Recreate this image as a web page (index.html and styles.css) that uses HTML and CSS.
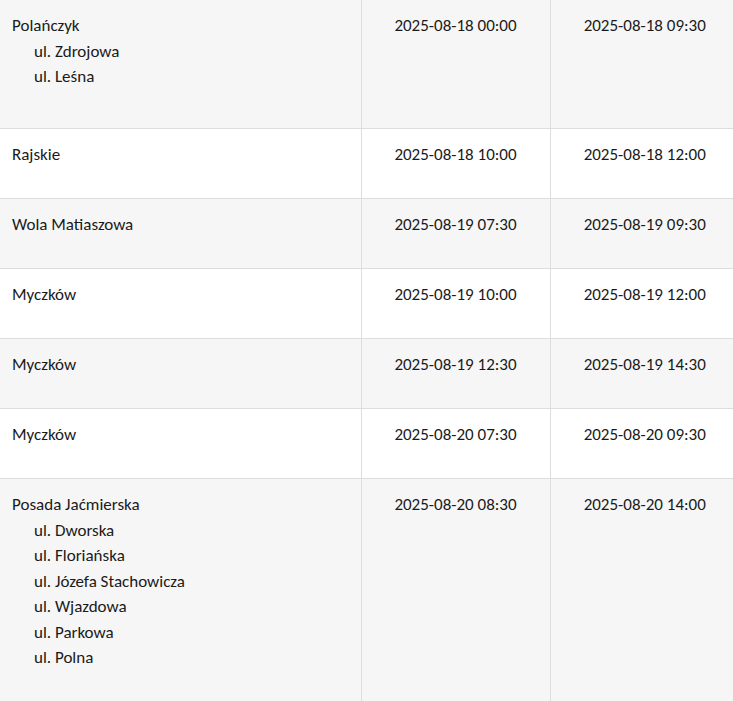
FILE: index.html
```html
<!DOCTYPE html>
<html lang="pl">
<head>
<meta charset="utf-8">
<title>Harmonogram</title>
<link rel="stylesheet" href="styles.css">
</head>
<body>
<table class="schedule">
  <colgroup>
    <col class="col-place">
    <col class="col-time">
    <col class="col-time">
  </colgroup>
  <tbody>
    <tr class="row-alt first">
      <td class="place">Polańczyk
        <ul class="streets"><li>ul. Zdrojowa</li><li>ul. Leśna</li></ul>
      </td>
      <td class="time">2025-08-18 00:00</td>
      <td class="time">2025-08-18 09:30</td>
    </tr>
    <tr>
      <td class="place">Rajskie</td>
      <td class="time">2025-08-18 10:00</td>
      <td class="time">2025-08-18 12:00</td>
    </tr>
    <tr class="row-alt">
      <td class="place">Wola Matiaszowa</td>
      <td class="time">2025-08-19 07:30</td>
      <td class="time">2025-08-19 09:30</td>
    </tr>
    <tr>
      <td class="place">Myczków</td>
      <td class="time">2025-08-19 10:00</td>
      <td class="time">2025-08-19 12:00</td>
    </tr>
    <tr class="row-alt">
      <td class="place">Myczków</td>
      <td class="time">2025-08-19 12:30</td>
      <td class="time">2025-08-19 14:30</td>
    </tr>
    <tr>
      <td class="place">Myczków</td>
      <td class="time">2025-08-20 07:30</td>
      <td class="time">2025-08-20 09:30</td>
    </tr>
    <tr class="row-alt">
      <td class="place">Posada Jaćmierska
        <ul class="streets"><li>ul. Dworska</li><li>ul. Floriańska</li><li>ul. Józefa Stachowicza</li><li>ul. Wjazdowa</li><li>ul. Parkowa</li><li>ul. Polna</li></ul>
      </td>
      <td class="time">2025-08-20 08:30</td>
      <td class="time">2025-08-20 14:00</td>
    </tr>
  </tbody>
</table>
</body>
</html>
```

FILE: styles.css
```css
html, body {
  margin: 0;
  padding: 0;
  overflow: hidden;
  background: #ffffff;
}

body {
  font-family: Carlito, Calibri, "Liberation Sans Narrow", "Open Sans", sans-serif;
  font-size: 17px;
  line-height: 25.5px;
  color: #1a1a1a;
}

.schedule {
  border-collapse: collapse;
  table-layout: fixed;
  width: 739px;
}

.col-place { width: 361px; }
.col-time { width: 189px; }

.schedule td {
  vertical-align: top;
  padding: 13px 12px 30.5px;
  border-top: 1px solid #dddddd;
  border-left: 1px solid #dddddd;
}

.schedule td:first-child {
  border-left: none;
}

.schedule tr.first td {
  border-top: none;
}

.row-alt {
  background: #f6f6f6;
}

.time {
  text-align: center;
}

.streets {
  list-style: none;
  margin: 0 0 8px;
  padding: 0 0 0 22px;
}
```
